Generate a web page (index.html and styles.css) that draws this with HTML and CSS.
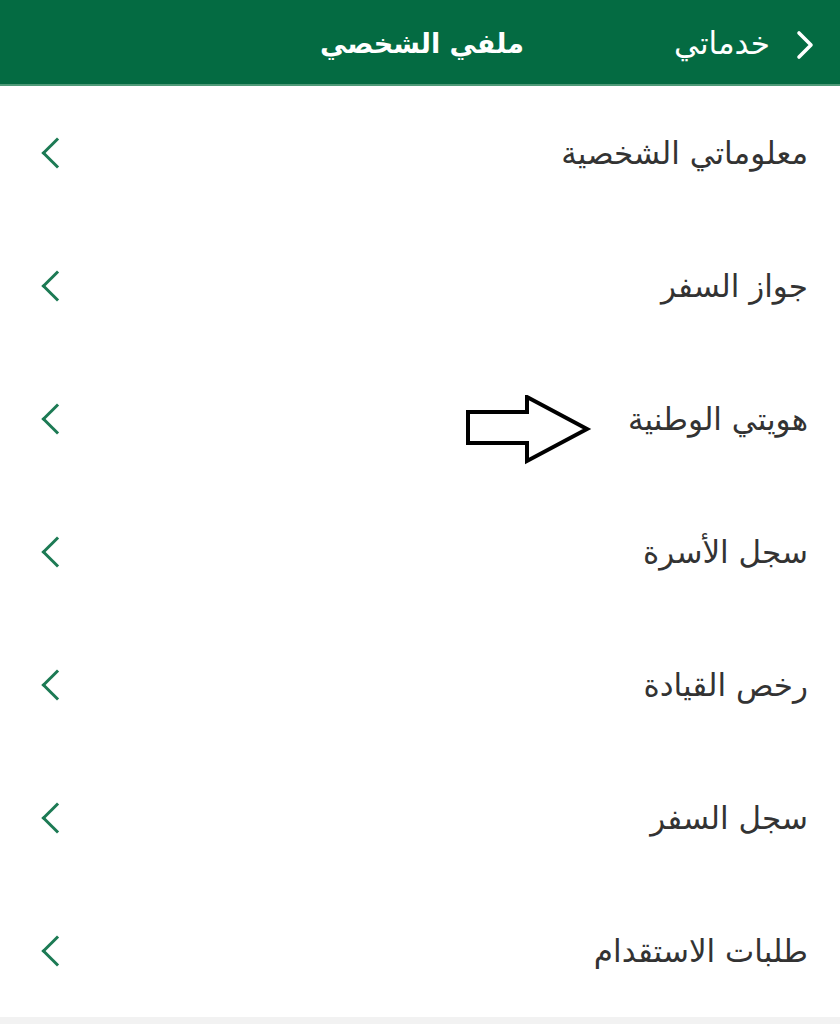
FILE: index.html
```html
<!DOCTYPE html>
<html lang="ar" dir="rtl">
<head>
  <meta charset="UTF-8" />
  <meta name="viewport" content="width=device-width, initial-scale=1.0" />
  <title>ملفي الشخصي</title>
  <link rel="stylesheet" href="styles.css">
</head>
<body>
  <header class="topbar">
    <a href="#" class="back">
      <svg class="back-icon" viewBox="0 0 18 30" width="18" height="30">
        <path d="M3 3 L15 15 L3 27" fill="none" stroke="#fff" stroke-width="3.6" stroke-linecap="round" stroke-linejoin="round" />
      </svg>
      <span>خدماتي</span>
    </a>
    <h1 class="title">ملفي الشخصي</h1>
  </header>

  <!-- قائمة الملف -->
  <ul class="menu">
    <li class="row"><span>معلوماتي الشخصية</span><i class="chev"></i></li>
    <li class="row"><span>جواز السفر</span><i class="chev"></i></li>
    <li class="row">
      <span>هويتي الوطنية</span><i class="chev"></i>
      <svg class="pointer" viewBox="0 0 126 70" width="126" height="70">
        <path d="M2 17 H61 V2 L121 34 L61 66 V48 H2 Z" fill="#fff" stroke="#000" stroke-width="4" stroke-linejoin="miter" />
      </svg>
    </li>
    <li class="row"><span>سجل الأسرة</span><i class="chev"></i></li>
    <li class="row"><span>رخص القيادة</span><i class="chev"></i></li>
    <li class="row"><span>سجل السفر</span><i class="chev"></i></li>
    <li class="row"><span>طلبات الاستقدام</span><i class="chev"></i></li>
  </ul>
</body>
</html>
```

FILE: styles.css
```css
body {
  font-family: "DejaVu Sans", "Noto Sans", sans-serif;
  margin: 0;
  background-color: #f2f2f2;
  color: #333;
}
.topbar {
  background-color: #046b42;
  height: 78px;
  padding: 6px 26px 0 0;
  border-bottom: 2px solid #4f9a78;
  display: flex;
  align-items: center;
}
.back {
  display: flex;
  align-items: center;
  gap: 26px;
  color: white;
  text-decoration: none;
  font-size: 31px;
}
.back span {
  padding-bottom: 4px;
}
.title {
  margin: 0 150px 0 0;
  color: white;
  font-size: 27px;
  font-weight: bold;
  padding-bottom: 4px;
}
.menu {
  list-style: none;
  margin: 0;
  padding: 0;
  background-color: #fff;
}
.row {
  position: relative;
  height: 133px;
  display: flex;
  align-items: center;
  justify-content: space-between;
  padding: 0 32px 0 46px;
  font-size: 31px;
}
.chev {
  width: 19px;
  height: 19px;
  border-left: 3px solid #1c7a54;
  border-bottom: 3px solid #1c7a54;
  transform: rotate(45deg);
}
.pointer {
  position: absolute;
  left: 466px;
  top: 43px;
}
```
